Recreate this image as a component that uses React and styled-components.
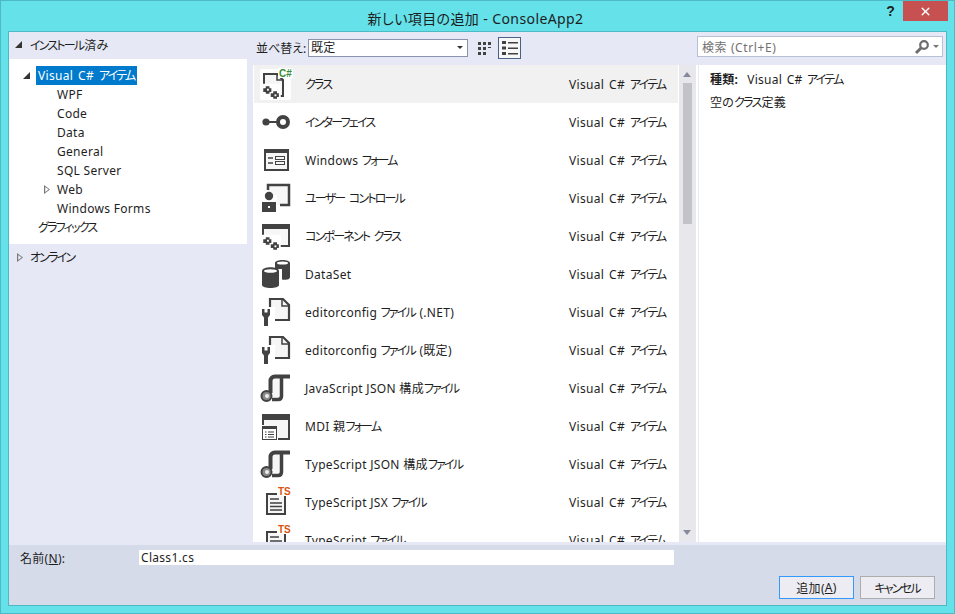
import React from 'react';
import styled, { createGlobalStyle } from 'styled-components';
import { IoClose } from 'react-icons/io5';

const DARK = '#424242';
const PALE = '#f6f6f6';

const GlobalStyle = createGlobalStyle`
  html, body { margin: 0; padding: 0; }
  body {
    width: 955px;
    height: 614px;
    overflow: hidden;
    font-family: "Noto Sans", "Noto Sans CJK JP", sans-serif;
    font-size: 12px;
    font-feature-settings: "palt";
    letter-spacing: 0.3px;
    color: #1e1e1e;
  }
  * { box-sizing: border-box; }
`;

// katakana is set much narrower in the original UI font
const Kana = styled.span`
  letter-spacing: -1.8px;
  margin-right: 1px;
`;

const Jp = ({ children }) =>
  children.split(/([ァ-ヶー]+)/).map((part, i) =>
    i % 2 ? <Kana key={i}>{part}</Kana> : part
  );

const Gears = ({ x = 0, y = 0 }) => (
  <g transform={`translate(${x} ${y}) scale(1.25)`}>
    <rect x="-1" y="-1" width="16" height="13" fill="#fff" />
    <path d="M3 1h3v1.500h1.500v3H6v1.500H3V5.500H1v-3h2z" fill={DARK} />
    <path d="M9 5h3v1.500h1.500v3H12V11H9V9.500H7v-3h2z" fill={DARK} />
    <rect x="4" y="3" width="1.500" height="1.500" fill="#fff" />
    <rect x="10" y="7.500" width="1.500" height="1.500" fill="#fff" />
  </g>
);

const ClassIcon = () => (
  <svg width="34" height="34" viewBox="0 0 34 34">
    <rect x="1" y="2" width="31" height="31" rx="2" fill="#fff" />
    <path d="M5 7h13l6 6v16H5z" fill={PALE} stroke={DARK} strokeWidth="2" />
    <path d="M18 6v7h6" fill="none" stroke={DARK} strokeWidth="1.500" />
    <Gears x={3} y={18} />
    <rect x="19" y="1" width="15" height="10" fill="#fff" />
    <text x="20" y="9.500" fontFamily="Liberation Sans" fontWeight="700" fontSize="10" letterSpacing="0" fill="#388a34">C#</text>
  </svg>
);

const InterfaceIcon = () => (
  <svg width="34" height="34" viewBox="0 0 34 34">
    <circle cx="7" cy="17" r="3.600" fill={DARK} />
    <rect x="7" y="16" width="14" height="2" fill={DARK} />
    <circle cx="24" cy="17" r="5" fill="#fff" stroke={DARK} strokeWidth="4" />
  </svg>
);

const FormIcon = () => (
  <svg width="34" height="34" viewBox="0 0 34 34">
    <rect x="6" y="7" width="23" height="20" fill={PALE} stroke={DARK} strokeWidth="2" />
    <rect x="5" y="6" width="25" height="4" fill={DARK} />
    <path d="M9 15h5M9 20h5" stroke={DARK} strokeWidth="1.500" />
    <rect x="16.500" y="13.500" width="9" height="3" fill="none" stroke={DARK} />
    <rect x="16.500" y="18.500" width="9" height="3" fill="none" stroke={DARK} />
  </svg>
);

const UserControlIcon = () => (
  <svg width="34" height="34" viewBox="0 0 34 34">
    <path d="M9 4h21v20H18V14H9z" fill={PALE} />
    <path d="M9 9V4h21v20h-9" fill="none" stroke={DARK} strokeWidth="2.500" />
    <circle cx="10" cy="15" r="4.200" fill={DARK} />
    <rect x="3" y="21" width="14" height="10" fill={DARK} />
    <rect x="9" y="25" width="2" height="2" fill="#fff" />
  </svg>
);

const ComponentIcon = () => (
  <svg width="34" height="34" viewBox="0 0 34 34">
    <rect x="4" y="6" width="26" height="21" fill={PALE} />
    <path d="M4 20V6h26v21H16" fill="none" stroke={DARK} strokeWidth="2" />
    <rect x="3" y="5" width="28" height="5" fill={DARK} />
    <Gears x={3} y={17} />
  </svg>
);

const DataSetIcon = () => (
  <svg width="34" height="34" viewBox="0 0 34 34">
    <path d="M16 6c0-4 15-4 15 0v14c0 3-5 3-8 2.500V12h-7z" fill={DARK} />
    <ellipse cx="23.500" cy="6" rx="5.500" ry="1.500" fill="#fff" />
    <path d="M3 14c0-5 17-5 17 0v14c0 4-17 4-17 0z" fill={DARK} />
    <ellipse cx="11.500" cy="14" rx="6.500" ry="1.800" fill="#fff" />
  </svg>
);

const ConfigIcon = () => (
  <svg width="34" height="34" viewBox="0 0 34 34">
    <path d="M11 4h13l6 6v15H11z" fill={PALE} stroke={DARK} strokeWidth="2.200" strokeLinejoin="miter" />
    <path d="M23 3v8h7" fill="none" stroke={DARK} strokeWidth="1.500" />
    <rect x="2" y="12" width="14" height="20" fill="#fff" />
    <path d="M3 14h2.500v3.500h3V14H11v6l-2 2.500V31H5v-8.500L3 20z" fill={DARK} />
  </svg>
);

const JsonIcon = () => (
  <svg width="34" height="34" viewBox="0 0 34 34">
    <path d="M24 5h-7c-3 0-5 2-5 5v16h10V5z" fill={PALE} />
    <path d="M31 5.500H16c-3 0-4.500 2-4.500 4.500v12" fill="none" stroke={DARK} strokeWidth="4" />
    <path d="M22.500 6v19c0 2.500-1.500 3.500-3.500 3.500h-6" fill="none" stroke={DARK} strokeWidth="3.500" />
    <circle cx="7.500" cy="25" r="5" fill="#8a8a8a" stroke={DARK} strokeWidth="2" />
    <circle cx="8" cy="25" r="2" fill="#eee" />
  </svg>
);

const MdiIcon = () => (
  <svg width="34" height="34" viewBox="0 0 34 34">
    <rect x="4" y="6" width="26" height="23" fill={PALE} />
    <path d="M4 16V6h26v24H19" fill="none" stroke={DARK} strokeWidth="2" />
    <rect x="3" y="5" width="28" height="6" fill={DARK} />
    <rect x="3.500" y="17.500" width="14" height="13" fill="#fff" stroke={DARK} />
    <rect x="3" y="17" width="15" height="3" fill={DARK} />
    <path d="M6 23h1.500M9 23h6M6 25.500h1.500M9 25.500h6M6 28h1.500M9 28h6" stroke={DARK} />
  </svg>
);

const TsIcon = () => (
  <svg width="34" height="34" viewBox="0 0 34 34">
    <path d="M8 9h18v20H8z" fill={PALE} stroke={DARK} strokeWidth="2" />
    <path d="M11 14h9M11 18h12M11 21.500h12M11 25h12" stroke={DARK} strokeWidth="1.600" />
    <rect x="18" y="1" width="14" height="10" fill="#fff" />
    <text x="19" y="10" fontFamily="Liberation Sans" fontWeight="700" fontSize="10" letterSpacing="0" fill="#d9550e">TS</text>
  </svg>
);

const templates = [
  { name: 'クラス', icon: <ClassIcon />, selected: true },
  { name: 'インターフェイス', icon: <InterfaceIcon /> },
  { name: 'Windows フォーム', icon: <FormIcon /> },
  { name: 'ユーザー コントロール', icon: <UserControlIcon /> },
  { name: 'コンポーネント クラス', icon: <ComponentIcon /> },
  { name: 'DataSet', icon: <DataSetIcon /> },
  { name: 'editorconfig ファイル (.NET)', icon: <ConfigIcon /> },
  { name: 'editorconfig ファイル (既定)', icon: <ConfigIcon /> },
  { name: 'JavaScript JSON 構成ファイル', icon: <JsonIcon /> },
  { name: 'MDI 親フォーム', icon: <MdiIcon /> },
  { name: 'TypeScript JSON 構成ファイル', icon: <JsonIcon /> },
  { name: 'TypeScript JSX ファイル', icon: <TsIcon /> },
  { name: 'TypeScript ファイル', icon: <TsIcon /> },
];

const treeItems = ['WPF', 'Code', 'Data', 'General', 'SQL Server', 'Web', 'Windows Forms'];

export default function App() {
  return (
    <>
      <GlobalStyle />
      <Dialog>
        <TitleBar>
          <Title>新しい項目の追加 - ConsoleApp2</Title>
          <HelpButton>?</HelpButton>
          <CloseButton><IoClose size={15} /></CloseButton>
        </TitleBar>
        <Client>
          <Upper>
            <LeftPane>
              <SectionHeader>
                <FilledArrow />
                <span><Jp>インストール済み</Jp></span>
              </SectionHeader>
              <Tree>
                <TreeRoot>
                  <FilledArrow />
                  <Selected><Jp>Visual C# アイテム</Jp></Selected>
                </TreeRoot>
                {treeItems.map((item) => (
                  <TreeChild key={item}>
                    {item === 'Web' && <OpenArrow />}
                    {item}
                  </TreeChild>
                ))}
                <TreeSibling><Jp>グラフィックス</Jp></TreeSibling>
              </Tree>
              <OnlineRow>
                <OpenArrow />
                <Jp>オンライン</Jp>
              </OnlineRow>
            </LeftPane>
            <MiddlePane>
              <Toolbar>
                <SortLabel>並べ替え:</SortLabel>
                <SortSelect>
                  既定
                  <SelectArrow />
                </SortSelect>
                <ViewButton>
                  <svg width="14" height="14" viewBox="0 0 14 14">
                    <path d="M0 1h3v3H0zM5 1h3v3H5zM10 1h3v3h-3zM0 6h3v3H0zM5 6h3v3H5zM10 6h3v1h-3zM0 11h3v3H0zM5 11h3v3H5z" fill="#424242" />
                  </svg>
                </ViewButton>
                <ViewButton $active>
                  <svg width="16" height="14" viewBox="0 0 16 14">
                    <path d="M0 0h4v3H0zM0 5.500h4v3H0zM0 11h4v3H0zM6 1h10v1.500H6zM6 6.500h10V8H6zM6 12h10v1.500H6z" fill="#424242" />
                  </svg>
                </ViewButton>
              </Toolbar>
              <ListArea>
                <TemplateList>
                  {templates.map((item) => (
                    <TemplateRow key={item.name} $selected={item.selected}>
                      <IconSlot>{item.icon}</IconSlot>
                      <TemplateName><Jp>{item.name}</Jp></TemplateName>
                      <TemplateType><Jp>Visual C# アイテム</Jp></TemplateType>
                    </TemplateRow>
                  ))}
                </TemplateList>
                <ScrollBar>
                  <ScrollUp />
                  <ScrollThumb />
                  <ScrollDown />
                </ScrollBar>
              </ListArea>
            </MiddlePane>
            <RightPane>
              <SearchBar>
                <SearchInput>
                  <SearchHint>検索 (Ctrl+E)</SearchHint>
                  <svg width="16" height="16" viewBox="0 0 16 16">
                    <circle cx="10" cy="6" r="3.800" fill="none" stroke="#6d6d6d" strokeWidth="2.200" />
                    <path d="M7 9l-5 5" stroke="#6d6d6d" strokeWidth="3" />
                  </svg>
                  <SearchArrow />
                </SearchInput>
              </SearchBar>
              <Details>
                <DetailRow><strong>種類:</strong>&nbsp;&nbsp;<Jp>Visual C# アイテム</Jp></DetailRow>
                <DetailRow><Jp>空のクラス定義</Jp></DetailRow>
              </Details>
            </RightPane>
          </Upper>
          <Footer>
            <NameRow>
              <NameLabel>名前(<u>N</u>):</NameLabel>
              <NameInput>Class1.cs</NameInput>
            </NameRow>
            <Buttons>
              <DialogButton $primary>追加(<u>A</u>)</DialogButton>
              <DialogButton><Jp>キャンセル</Jp></DialogButton>
            </Buttons>
          </Footer>
        </Client>
      </Dialog>
    </>
  );
}

const Dialog = styled.div`
  width: 955px;
  height: 614px;
  display: flex;
  flex-direction: column;
  background: #64e1e9;
  border: 1px solid #4cb9c5;
  padding: 0 7px 7px 7px;
`;

const TitleBar = styled.div`
  position: relative;
  height: 30px;
  flex: none;
  display: flex;
  align-items: center;
  justify-content: center;
`;

const Title = styled.div`
  font-size: 14px;
  letter-spacing: 0.4px;
  padding-top: 3px;
  margin-left: -4px;
`;

const HelpButton = styled.div`
  position: absolute;
  top: 1px;
  right: 52px;
  font: 700 14px "Liberation Sans", sans-serif;
  line-height: 18px;
`;

const CloseButton = styled.div`
  position: absolute;
  top: 0;
  right: -1px;
  width: 45px;
  height: 20px;
  background: #c75050;
  color: #fff;
  display: flex;
  align-items: center;
  justify-content: center;
`;

const Client = styled.div`
  flex: 1;
  min-height: 0;
  display: flex;
  flex-direction: column;
  border: 1px solid #4cb9c5;
  background: #e6e9f5;
`;

const Upper = styled.div`
  flex: 1;
  min-height: 0;
  display: grid;
  grid-template-columns: 238px 451px 1fr;
`;

const LeftPane = styled.div`
  display: flex;
  flex-direction: column;
`;

const FilledArrow = styled.span`
  width: 0;
  height: 0;
  border-style: solid;
  border-width: 0 0 7px 7px;
  border-color: transparent transparent #333 transparent;
  flex: none;
`;

const OpenArrow = styled.span`
  position: absolute;
  width: 6px;
  height: 9px;
  background: #777;
  clip-path: polygon(0 0, 100% 50%, 0 100%, 0 0, 20% 22%, 20% 78%, 78% 50%, 20% 22%);
`;

const SectionHeader = styled.div`
  height: 27px;
  display: flex;
  align-items: center;
  gap: 8px;
  padding: 0 0 2px 6px;
`;

const Tree = styled.div`
  background: #fff;
  height: 185px;
  padding-top: 7px;
  display: flex;
  flex-direction: column;
`;

const TreeRoot = styled.div`
  height: 19px;
  display: flex;
  align-items: center;
  gap: 6px;
  padding-left: 14px;
`;

const Selected = styled.span`
  background: #007acc;
  color: #fff;
  height: 19px;
  line-height: 19px;
  padding: 0 2px;
  word-spacing: 1.5px;
`;

const TreeChild = styled.div`
  position: relative;
  height: 19px;
  line-height: 19px;
  padding-left: 48px;
  ${OpenArrow} {
    left: 35px;
    top: 5px;
  }
`;

const TreeSibling = styled.div`
  height: 19px;
  line-height: 19px;
  padding-left: 29px;
`;

const OnlineRow = styled.div`
  position: relative;
  height: 27px;
  line-height: 27px;
  padding-left: 21px;
  ${OpenArrow} {
    left: 8px;
    top: 9px;
  }
`;

const MiddlePane = styled.div`
  display: flex;
  flex-direction: column;
  padding: 0 0 3px 6px;
  min-height: 0;
`;

const Toolbar = styled.div`
  height: 33px;
  flex: none;
  display: flex;
  align-items: center;
  padding: 0 0 2px 3px;
`;

const SortLabel = styled.span`
  width: 52px;
  letter-spacing: 0;
`;

const SortSelect = styled.div`
  position: relative;
  width: 160px;
  height: 18px;
  line-height: 15px;
  background: #fff;
  border: 1px solid #8a93ab;
  padding-left: 2px;
  margin-right: 5px;
`;

const SelectArrow = styled.span`
  position: absolute;
  right: 4px;
  top: 6px;
  border-style: solid;
  border-width: 3px 3px 0 3px;
  border-color: #333 transparent transparent transparent;
`;

const ViewButton = styled.div`
  width: 23px;
  height: 22px;
  display: flex;
  align-items: center;
  justify-content: center;
  border: 1px solid ${({ $active }) => ($active ? '#4a6185' : 'transparent')};
  background: ${({ $active }) => ($active ? '#f7f7f7' : 'transparent')};
  margin-left: ${({ $active }) => ($active ? '2px' : '0')};
`;

const ListArea = styled.div`
  flex: 1;
  min-height: 0;
  display: flex;
  gap: 1px;
  background: #fff;
  padding-left: 1px;
`;

const TemplateList = styled.div`
  width: 424px;
  overflow: hidden;
`;

const TemplateRow = styled.div`
  height: 38px;
  display: flex;
  align-items: center;
  background: ${({ $selected }) => ($selected ? '#f1f1f1' : 'transparent')};
`;

const IconSlot = styled.div`
  width: 51px;
  padding-left: 5px;
  height: 34px;
  flex: none;
`;

const TemplateName = styled.div`
  flex: 1;
  white-space: nowrap;
`;

const TemplateType = styled.div`
  width: 109px;
  white-space: nowrap;
  word-spacing: 1.5px;
`;

const ScrollBar = styled.div`
  position: relative;
  width: 17px;
  background: #e8e8ec;
`;

const ScrollUp = styled.span`
  position: absolute;
  top: 7px;
  left: 4px;
  border-style: solid;
  border-width: 0 4.500px 5px 4.500px;
  border-color: transparent transparent #868999 transparent;
`;

const ScrollThumb = styled.div`
  position: absolute;
  top: 18px;
  left: 4px;
  width: 9px;
  height: 141px;
  background: #c2c3c9;
`;

const ScrollDown = styled.span`
  position: absolute;
  bottom: 7px;
  left: 4px;
  border-style: solid;
  border-width: 5px 4.500px 0 4.500px;
  border-color: #868999 transparent transparent transparent;
`;

const RightPane = styled.div`
  display: flex;
  flex-direction: column;
  min-height: 0;
  padding-bottom: 3px;
`;

const SearchBar = styled.div`
  height: 33px;
  flex: none;
  padding: 4px 3px 0 0;
  margin-left: -1px;
`;

const SearchInput = styled.div`
  height: 21px;
  background: #fff;
  border: 1px solid #b8c0d6;
  display: flex;
  align-items: center;
  padding: 0 3px 0 4px;
  gap: 3px;
`;

const SearchHint = styled.span`
  flex: 1;
  color: #717171;
  letter-spacing: 0.6px;
`;

const SearchArrow = styled.span`
  border-style: solid;
  border-width: 3px 3px 0 3px;
  border-color: #777 transparent transparent transparent;
`;

const Details = styled.div`
  flex: 1;
  background: #fff;
  padding: 3px 0 0 11px;
  margin-left: 1px;
`;

const DetailRow = styled.div`
  height: 23px;
  line-height: 23px;
  word-spacing: 1px;
  strong { font-weight: 700; }
`;

const Footer = styled.div`
  height: 60px;
  flex: none;
  background: #d6dbe9;
  padding: 5px 11px 0 11px;
  display: flex;
  flex-direction: column;
`;

const NameRow = styled.div`
  display: flex;
  align-items: center;
  height: 15px;
`;

const NameLabel = styled.div`
  width: 119px;
`;

const NameInput = styled.div`
  width: 535px;
  height: 15px;
  line-height: 15px;
  background: #fff;
  padding-left: 2px;
`;

const Buttons = styled.div`
  display: flex;
  justify-content: flex-end;
  gap: 6px;
  margin-top: 11px;
`;

const DialogButton = styled.div`
  width: 75px;
  height: 23px;
  display: flex;
  align-items: center;
  justify-content: center;
  background: #ececf2;
  border: 1px solid ${({ $primary }) => ($primary ? '#3399ff' : '#adadad')};
  u { text-underline-offset: 1px; }
`;
